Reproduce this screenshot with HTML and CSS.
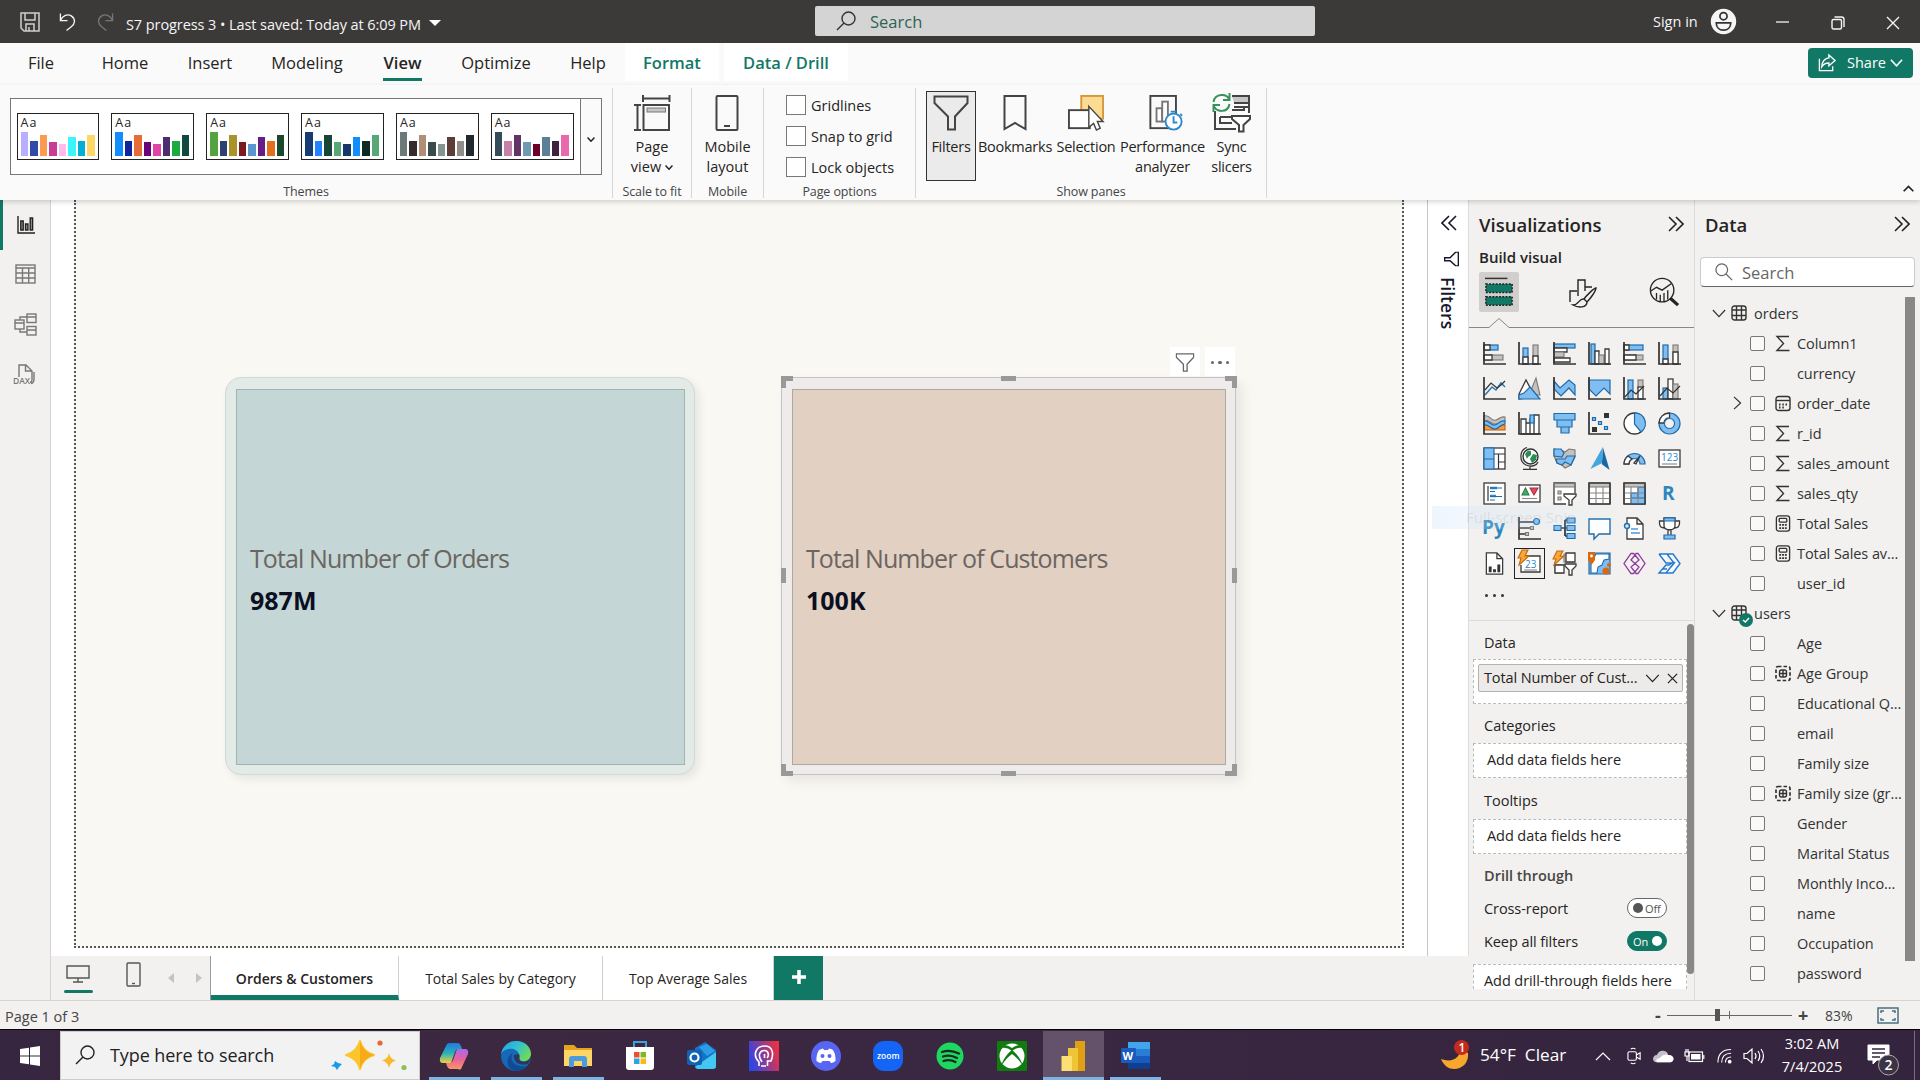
FILE: index.html
```html
<!DOCTYPE html>
<html lang="en">
<head>
<meta charset="utf-8">
<title>S7 progress 3</title>
<link rel="stylesheet" href="styles.css">
</head>
<body>
<svg class="defs" width="0" height="0">
  <symbol id="i-table" viewBox="0 0 16 16"><rect x="1" y="1" width="14" height="14" rx="2.5"/><path d="M1 5H15M1 10.5H15M5.5 1V15M10.5 1V15"/></symbol>
  <symbol id="i-sum" viewBox="0 0 16 16"><path d="M14 1H2L8.500 8L2 15H14.500"/></symbol>
  <symbol id="i-date" viewBox="0 0 16 16"><rect x="1" y="1" width="14" height="14" rx="2.500"/><path d="M1 5H15"/><path d="M4 9h1.500M7.300 9h1.500M10.500 9h1.500M4 12h1.500M7.300 12h1.500" stroke-width="1.800"/></symbol>
  <symbol id="i-calc" viewBox="0 0 16 18"><rect x="1" y="1" width="14" height="16" rx="2.500"/><rect x="4" y="3.500" width="8" height="4" rx="1"/><path d="M4 10.500h2M7 10.500h2M10 10.500h2M4 13.800h2M7 13.800h2M10 13.800h2" stroke-width="1.900"/></symbol>
  <symbol id="i-group" viewBox="0 0 16 16"><rect x="1" y="1" width="14" height="14" rx="2" stroke-dasharray="3.500 2" stroke-width="1.700"/><rect x="4.500" y="4.500" width="7" height="7" rx="2"/><path d="M4.500 8H11.500M8 4.500V11.500"/></symbol>
  <symbol id="i-down" viewBox="0 0 16 10"><path d="M1 1L8 8.500L15 1"/></symbol>
  <symbol id="i-right" viewBox="0 0 10 16"><path d="M1 1L8.500 8L1 15"/></symbol>
  <symbol id="i-dbl" viewBox="0 0 16 16"><path d="M1 1L8 8L1 15M8 1L15 8L8 15"/></symbol>
  <symbol id="i-funnel" viewBox="0 0 36 36"><path d="M1.500 1.500H34.500V8L22 21.500V34.500H15V21.500L1.500 8Z"/></symbol>
  <symbol id="i-glass" viewBox="0 0 20 20"><circle cx="12.500" cy="7.500" r="6.500"/><path d="M8 12L1 19"/></symbol>
</svg>

<header class="titlebar">
  <svg class="tb-save" viewBox="0 0 20 20"><path d="M1 1H19V19H4L1 16ZM5 1V8H15V1M6 19V12H14V19M9 15V19"/></svg>
  <svg class="tb-undo" viewBox="0 0 18 20"><path d="M1.500 1V8.500H9M1.500 8.500C4 3 9 1 13 3.500C18 7 17 12 13 15L8 19"/></svg>
  <svg class="tb-redo" viewBox="0 0 18 20"><path d="M16.500 1V8.500H9M16.500 8.500C14 3 9 1 5 3.500C0 7 1 12 5 15L10 19"/></svg>
  <span class="tb-name">S7 progress 3 • Last saved: Today at 6:09 PM</span>
  <i class="tri"></i>
  <div class="tb-search"><svg viewBox="0 0 20 20"><use href="#i-glass"/></svg><span>Search</span></div>
  <span class="signin">Sign in</span>
  <svg class="avatar" viewBox="0 0 26 26"><circle cx="13" cy="13" r="12.500" fill="#f5f5f5"/><circle cx="13" cy="7.500" r="3.700" fill="none" stroke="#333" stroke-width="1.800"/><path d="M5.500 14.500H20.500C20.500 19 17.500 22 13 22S5.500 19 5.500 14.500Z" fill="none" stroke="#333" stroke-width="1.800"/></svg>
  <svg class="win-min" viewBox="0 0 14 14"><path d="M0 7H14"/></svg>
  <svg class="win-max" viewBox="0 0 14 14"><rect x="1" y="3.500" width="9.500" height="9.500" rx="1.500"/><path d="M3.500 1H10.500Q13 1 13 3.500V11"/></svg>
  <svg class="win-x" viewBox="0 0 14 14"><path d="M1 1L13 13M13 1L1 13"/></svg>
</header>

<nav class="tabs">
  <span class="t-file">File</span><span class="t-home">Home</span><span class="t-insert">Insert</span><span class="t-model">Modeling</span><span class="t-view">View</span><span class="t-opt">Optimize</span><span class="t-help">Help</span><span class="ctx t-format">Format</span><span class="ctx t-drill">Data / Drill</span>
  <button class="share"><svg viewBox="0 0 20 20"><path d="M2 6V18.500H16V14M12 2L18.500 8L12 13.500V10.500C8 10.500 6 12 4.500 14.500C4.500 9 8 5.500 12 5.200Z"/></svg><span>Share</span><svg class="chev" viewBox="0 0 16 10"><use href="#i-down"/></svg></button>
</nav>

<section class="ribbon">
  <div class="group g-themes">
    <div class="gallery">
      <div class="theme"><b>Aa</b><div class="bars"><i style="height:24px;background:#b8b0ff"></i><i style="height:15px;background:#3149a8"></i><i style="height:21px;background:#fa9b50"></i><i style="height:14px;background:#c83c96"></i><i style="height:12px;background:#ffbbea"></i><i style="height:19px;background:#3cf5fa"></i><i style="height:15px;background:#00aed6"></i><i style="height:21px;background:#ffd765"></i></div></div>
      <div class="theme"><b>Aa</b><div class="bars"><i style="height:24px;background:#118dff"></i><i style="height:15px;background:#12239e"></i><i style="height:21px;background:#e66c37"></i><i style="height:14px;background:#6b007b"></i><i style="height:12px;background:#e044a7"></i><i style="height:19px;background:#4b2e70"></i><i style="height:15px;background:#1aab40"></i><i style="height:21px;background:#12483e"></i></div></div>
      <div class="theme"><b>Aa</b><div class="bars"><i style="height:24px;background:#55a33f"></i><i style="height:15px;background:#2e4272"></i><i style="height:21px;background:#aa9328"></i><i style="height:14px;background:#7d1a20"></i><i style="height:12px;background:#5a97cf"></i><i style="height:19px;background:#671d86"></i><i style="height:15px;background:#e2701e"></i><i style="height:21px;background:#1a482c"></i></div></div>
      <div class="theme"><b>Aa</b><div class="bars"><i style="height:24px;background:#173c73"></i><i style="height:15px;background:#2382ff"></i><i style="height:21px;background:#174638"></i><i style="height:14px;background:#57a777"></i><i style="height:12px;background:#143867"></i><i style="height:19px;background:#118dff"></i><i style="height:15px;background:#0d2a24"></i><i style="height:21px;background:#57a777"></i></div></div>
      <div class="theme"><b>Aa</b><div class="bars"><i style="height:24px;background:#6b7979"></i><i style="height:15px;background:#362c2d"></i><i style="height:21px;background:#b18e78"></i><i style="height:14px;background:#3b4b4a"></i><i style="height:12px;background:#849594"></i><i style="height:19px;background:#5c3d37"></i><i style="height:15px;background:#918e8a"></i><i style="height:21px;background:#22292e"></i></div></div>
      <div class="theme"><b>Aa</b><div class="bars"><i style="height:24px;background:#344b59"></i><i style="height:15px;background:#c582a8"></i><i style="height:21px;background:#633567"></i><i style="height:14px;background:#6f9ab4"></i><i style="height:12px;background:#6b0028"></i><i style="height:19px;background:#5b7f96"></i><i style="height:15px;background:#3f2140"></i><i style="height:21px;background:#ea69ac"></i></div></div>
      <div class="more"><svg viewBox="0 0 16 10"><use href="#i-down"/></svg></div>
    </div>
    <div class="glabel">Themes</div>
  </div>
  <div class="group g-scale">
    <div class="big"><svg viewBox="0 0 36 36"><path d="M9 0V7M35.500 0V7M9 3.500H35M0 10H7M0 35H7M3.500 10V35"/><rect x="9.500" y="10" width="25.500" height="25"/><rect x="13" y="13" width="18.500" height="4" fill="#c8c6c4" stroke="#797775" stroke-width="1"/></svg><span>Page<br>view<svg class="tiny" viewBox="0 0 16 10"><use href="#i-down"/></svg></span></div>
    <div class="glabel">Scale to fit</div>
  </div>
  <div class="group g-mobile">
    <div class="big"><svg viewBox="0 0 36 36"><rect x="7.500" y="1" width="21" height="34" rx="1"/><path d="M15 31H21"/></svg><span>Mobile<br>layout</span></div>
    <div class="glabel">Mobile</div>
  </div>
  <div class="group g-options">
    <div class="opts"><label><i></i>Gridlines</label><label><i></i>Snap to grid</label><label><i></i>Lock objects</label></div>
    <div class="glabel">Page options</div>
  </div>
  <div class="group g-panes">
    <div class="row">
      <div class="big b-filters"><svg viewBox="0 0 36 36"><use href="#i-funnel"/></svg><span>Filters</span></div>
      <div class="big b-book"><svg viewBox="0 0 36 36"><path d="M7.500 1H28.500V34L18 28L7.500 34Z"/></svg><span>Bookmarks</span></div>
      <div class="big b-sel"><svg viewBox="0 0 38 38"><rect x="14" y="1" width="23" height="24" fill="#fbdc92" stroke="#d9973c"/><rect x="1" y="16" width="22" height="19" fill="#fff"/><path d="M22 12L37 28H31L34 35L30 37L27 30L22 34Z" fill="#fff" stroke-width="1.500"/></svg><span>Selection</span></div>
      <div class="big b-perf"><svg viewBox="0 0 36 38"><rect x="1.500" y="1" width="27" height="34"/><rect x="8" y="14" width="6" height="14" stroke="#777" fill="#fff"/><rect x="14" y="7" width="6" height="21" stroke="#777" fill="#fff"/><circle cx="26" cy="28" r="8.500" fill="#fff" stroke="#2c8acb"/><path d="M26 22.500V29H30M23 17.500H29M33 20L35 22" stroke="#2c8acb"/></svg><span>Performance<br>analyzer</span></div>
      <div class="big b-sync"><svg viewBox="0 0 40 40"><path d="M20 3H37V10H22" fill="#c8c6c4"/><path d="M22 14H37V18M3 18V36H24M37 10V20M8 24H22M8 24V30H20M20 17H32V13" /><path d="M20 23H38V26L31.500 32V38.500H27V32L20 26Z" fill="#fff"/><path d="M1.500 9C3 0 15 0 17.500 7M17.500 0V7H11M17.500 11C16 20 4 20 1.500 12M1.500 19V12H8" stroke="#36945a"/></svg><span>Sync<br>slicers</span></div>
    </div>
    <div class="glabel">Show panes</div>
  </div>
  <div class="rest"><svg viewBox="0 0 16 10"><path d="M1 9L8 2L15 9"/></svg></div>
</section>

<main class="work">
  <aside class="rail">
    <div class="on"><svg class="r1" viewBox="0 0 18 18"><path d="M1 0V17H18" /><path d="M3.800 5H6.200V14H3.800ZM8.500 8H10.900V14H8.500ZM13.200 2H15.600V14H13.200Z" fill="#999"/></svg></div>
    <div><svg viewBox="0 0 21 20"><rect x="1" y="1" width="19" height="18"/><path d="M1 4H20M1 9H20M1 14H20M7.500 4V19M13.700 4V19"/></svg></div>
    <div><svg class="r3" viewBox="0 0 23 23"><rect x="1" y="7" width="9" height="9"/><path d="M1 10H10M6 7V4H13M6 16V19H13M13 4H22M13 17H22"/><rect x="13" y="1" width="9" height="8.500"/><rect x="13" y="13.500" width="9" height="8.500"/></svg></div>
    <div><svg class="r4" viewBox="0 0 22 21"><path d="M6 13V1H13L19 7V16Q19 18 17 18.500M12.500 1V7H19M21 8V15Q21 19 18 19.500"/><text x="0" y="20">DAX</text></svg></div>
  </aside>

  <section class="center">
    <div class="canvas">
      <div class="page">
        <article class="card c1"><div class="inner"><p>Total Number of Orders</p><strong>987M</strong></div></article>
        <article class="card c2"><div class="inner"><p>Total Number of Customers</p><strong>100K</strong></div>
          <i class="h tl"></i><i class="h tr"></i><i class="h bl"></i><i class="h br"></i><i class="h tm"></i><i class="h bm"></i><i class="h lm"></i><i class="h rm"></i>
          <div class="tools"><span><svg viewBox="0 0 36 36"><use href="#i-funnel"/></svg></span><span class="dots"><i></i><i></i><i></i></span></div>
        </article>
      </div>
    </div>
    <div class="filters">
      <svg class="dbl flip" viewBox="0 0 16 16"><use href="#i-dbl"/></svg>
      <svg class="fun" viewBox="0 0 36 36"><use href="#i-funnel"/></svg>
      <span>Filters</span>
    </div>
    <footer class="pages">
      <div class="views">
        <svg class="desk" viewBox="0 0 24 18"><path d="M1 1H23V13H1ZM12 13V17M7 17H17"/></svg>
        <svg class="phone" viewBox="0 0 15 25"><rect x="1" y="1" width="13" height="23" rx="1"/><path d="M6 21.500H9"/></svg>
        <i class="al"></i><i class="ar"></i>
      </div>
      <div class="pt p1">Orders &amp; Customers</div><div class="pt p2">Total Sales by Category</div><div class="pt p3">Top Average Sales</div><div class="add"><svg viewBox="0 0 14 14"><path d="M7 0V14M0 7H14"/></svg></div>
    </footer>
  </section>

  <section class="viz">
    <div class="head"><h2>Visualizations</h2><svg class="dbl" viewBox="0 0 16 16"><use href="#i-dbl"/></svg></div>
    <h3>Build visual</h3>
    <div class="modes">
      <div class="m on"><svg viewBox="0 0 32 32"><path d="M1 1.500H25" stroke="#333" stroke-width="1.600"/><rect x="2" y="7.500" width="28" height="9" fill="#117865" stroke="#222" stroke-width="1.600" stroke-dasharray="2 1.500"/><rect x="2" y="21" width="28" height="9" fill="#117865" stroke="#222" stroke-width="1.600" stroke-dasharray="2 1.500"/></svg></div>
      <div class="m"><svg viewBox="0 0 30 30"><path d="M3 25V14H10M11 19V3H18V14M18 10H25"/><path d="M29 11C27 11 19 19 17 22C18 23 19 24 20 25C23 22 29 14 29 11ZM17 22C12 21 12 28 6 28C11 31 20 31 20 25"/></svg></div>
      <div class="m"><svg viewBox="0 0 32 32"><circle cx="14" cy="14" r="12.500"/><path d="M2 15L8 11L14 14L24 7M8 24V17M12 26V19M16 26V17M20 24V14"/><path d="M23 23L31 30" stroke-width="3.500"/></svg></div>
    </div>
    <svg class="notch" viewBox="0 0 225 12"><path d="M0 10.500H20L30 1.500L40 10.500H225"/></svg>
    <div class="grid">
      <svg viewBox="0 0 23 23"><rect class="b" x="1" y="3" width="14" height="5"/><path class="w" d="M1 3H7V8H1Z"/><rect class="g" x="1" y="13" width="19" height="5"/><path class="w" d="M1 13H9V18H1Z"/><path class="k" d="M1 0V22H23"/></svg>
      <svg viewBox="0 0 23 23"><rect class="b" x="5" y="6" width="5" height="16"/><path class="w" d="M5 15H10V22H5Z"/><rect class="g" x="15" y="3" width="5" height="19"/><path class="w" d="M15 14H20V22H15Z"/><path class="k" d="M1 0V22H23"/></svg>
      <svg viewBox="0 0 23 23"><rect class="b" x="1" y="2" width="21" height="4"/><path class="w" d="M1 6H14V10H1Z"/><rect class="g" x="1" y="10" width="10" height="5"/><path class="w" d="M1 16H17V20H1Z"/><path class="k" d="M1 0V22H23"/></svg>
      <svg viewBox="0 0 23 23"><rect class="b" x="3" y="2" width="4" height="20"/><path class="w" d="M7 9H11V22H7Z"/><rect class="g" x="11" y="13" width="5" height="9"/><path class="w" d="M17 7H21V22H17Z"/><path class="k" d="M1 0V22H23"/></svg>
      <svg viewBox="0 0 23 23"><rect class="b" x="1" y="3" width="19" height="5"/><path class="w" d="M1 3H6V8H1Z"/><rect class="g" x="1" y="13" width="19" height="5"/><path class="w" d="M1 13H13V18H1Z"/><path class="k" d="M1 0V22H23"/></svg>
      <svg viewBox="0 0 23 23"><rect class="b" x="5" y="3" width="5" height="19"/><path class="w" d="M5 17H10V22H5Z"/><rect class="g" x="15" y="3" width="5" height="19"/><path class="w" d="M15 10H20V22H15Z"/><path class="k" d="M1 0V22H23"/></svg>

      <svg viewBox="0 0 23 23"><path class="t" d="M2 18L9 10L13 13L18 6L22 10"/><path class="k n" d="M2 13L8 6L14 11L18 8L22 4"/><path class="k" d="M1 0V22H23"/></svg>
      <svg viewBox="0 0 23 23"><path class="g" d="M11 18L18 1L22 18Z"/><path class="w" d="M1 17L8 3L17 20L1 22Z"/><path class="b" d="M1 22V18L6 16L12 10L22 22Z"/></svg>
      <svg viewBox="0 0 23 23"><path class="b" d="M1 4L7 11L16 3L22 8V18L16 11L8 19L1 12Z"/><path class="k" d="M1 0V22H23"/></svg>
      <svg viewBox="0 0 23 23"><path class="b" d="M1 3H22V17L16 11L8 19L1 12Z"/><path class="k" d="M1 0V22H23"/></svg>
      <svg viewBox="0 0 23 23"><rect class="b" x="5" y="3" width="5" height="19"/><rect class="g" x="15" y="3" width="5" height="8"/><rect class="w" x="15" y="10" width="5" height="12"/><path class="k n" d="M2 20L8 13L13 17L21 9"/><path class="k" d="M1 0V22H23"/></svg>
      <svg viewBox="0 0 23 23"><rect class="b" x="5" y="11" width="5" height="11"/><rect class="w" x="10" y="2" width="5" height="20"/><rect class="g" x="15" y="7" width="5" height="15"/><path class="k n" d="M2 19L9 11L15 16L22 9"/><path class="k" d="M1 0V22H23"/></svg>

      <svg viewBox="0 0 23 23"><path d="M1 4C8 2 7 10 13 8C17 7 17 4 22 5V9C16 10 15 13 11 12C7 11 6 7 1 9Z" class="g"/><path d="M1 11C7 10 7 18 12 17C17 16 17 12 22 13V18H1Z" fill="#f29a3c" stroke="#c25d0c"/><path class="b" d="M1 9C6 8 8 14 12 13C16 12 17 8 22 9V12C17 12 16 17 12 17C7 17 6 12 1 13Z"/><path class="k" d="M1 0V22H23"/></svg>
      <svg viewBox="0 0 23 23"><path class="w" d="M3 7H8V22H3ZM8 11H12V22H8ZM12 7H16V22H12ZM16 3H21V22H16Z"/><rect class="b" x="12" y="3" width="4" height="8"/><path class="k" d="M1 0V22H23"/></svg>
      <svg viewBox="0 0 23 23"><path class="b" d="M1 1.500H22V8H1ZM4 8H19V15H4ZM8 15H16V21H8Z"/></svg>
      <svg viewBox="0 0 23 23"><path class="k" d="M1 0V22H23"/><path class="ns" d="M16 1h5v5h-5zM4 15h5v5h-5z" fill="#333"/><path class="b" d="M4.500 5.500h3v3h-3zM10.500 9.500h3v3h-3zM16.500 14.500h3v3h-3z"/></svg>
      <svg viewBox="0 0 23 23"><circle class="w" cx="11.500" cy="11.500" r="10.500"/><path class="b" d="M11.500 1A10.500 10.500 0 0 1 18 20L11.500 12Z"/></svg>
      <svg viewBox="0 0 23 23"><circle class="b" cx="11.500" cy="11.500" r="10.500"/><path class="w" d="M1 11A10.500 10.500 0 0 1 11.500 1V6A5 5 0 0 0 6 11Z"/><circle cx="11.500" cy="11.500" r="5" fill="#f2f1ef" stroke="#1f6cab"/></svg>

      <svg viewBox="0 0 23 23"><rect class="w" x="1" y="1" width="21" height="21"/><path class="b" d="M1 1H11V22H1ZM1 12H11"/><path class="k n" d="M11 7H22M15.500 7V22M15.500 15H22"/></svg>
      <svg viewBox="0 0 23 23"><circle cx="12.500" cy="9.500" r="7.500" fill="#fff" stroke="#333" stroke-width="1.400"/><path class="ns" d="M7 7L10 3.500L13 4L13 8L10 10L9 12ZM12 12L15 7L19 8L18 13L14 16Z" fill="#2c8f52"/><path class="k n" d="M9 0.500C1 3 1 15 8 18C14 20.500 19 18 20 15M12 19V22M5 22.300H19"/></svg>
      <svg viewBox="0 0 23 23"><path class="g" d="M1 2L8 3L12 5L16 2L22 3V10L18 18L12 21L9 18L4 16L1 9Z"/><path class="b" d="M1 2H8L11 6L9 10L1 9ZM3 12H12L14 9H22L18 18L12 15L9 18L4 16Z"/></svg>
      <svg viewBox="0 0 23 24"><path class="ns" d="M15 0L22 24L14 18Z" fill="#1768a4"/><path class="ns" d="M15 0L14 17L2 23Z" fill="#45a5df"/></svg>
      <svg viewBox="0 0 23 23"><path class="b" d="M1 17A10.500 10.500 0 0 1 22 17H17A5.500 5.500 0 0 0 6 17Z"/><path class="w" d="M1 17A10.500 10.500 0 0 1 5 9L9 12A5.500 5.500 0 0 0 6 17ZM11 16L17 9L13 17Z"/></svg>
      <svg viewBox="0 0 23 23"><rect class="w" x="1" y="3" width="21" height="17"/><text class="n123" x="3" y="14">123</text><path class="gl" d="M4 17H19"/></svg>

      <svg viewBox="0 0 23 23"><rect class="w" x="1" y="1" width="21" height="21"/><path class="k n" d="M5 4V19"/><path d="M7 6H14M7 14H13" stroke="#2c8acb" stroke-width="2.500"/><path d="M7 6H19M7 9.500H12M7 14.500H19M7 18H12" stroke="#1f6cab"/></svg>
      <svg viewBox="0 0 23 23"><rect class="w" x="1" y="3" width="21" height="17"/><path d="M4 13L7.500 6L11 13Z" fill="#54a668" stroke="#23804a"/><path d="M12 6H20L16 13Z" fill="#e04b5b" stroke="#b0303e"/><path class="gl" d="M4 16.500H19"/></svg>
      <svg viewBox="0 0 23 23"><path class="w" d="M13 22H1V1H22V11"/><path class="g" d="M1.500 1.500H21.500V5H1.500ZM5 9H8V12H5ZM5 15H8V18H5Z"/><path class="w" d="M11 12H23V14L19 18V23H16V18L11 14Z"/></svg>
      <svg viewBox="0 0 23 23"><rect class="w" x="1" y="1" width="21" height="21"/><path class="g" d="M1.500 1.500H21.500V5H1.500Z"/><path class="gl" d="M1 11H22M1 16.500H22M8 5V22M15 5V22"/><path class="k n" d="M1 1H22V22H1Z"/></svg>
      <svg viewBox="0 0 23 23"><rect class="w" x="1" y="1" width="21" height="21"/><path class="b" d="M15 5H22V16H15ZM8 16H22V22H8ZM8 11H15V16H8Z"/><path class="g" d="M1.500 1.500H21.500V5H1.500Z"/><path class="gl" d="M1 11H22M1 16.500H22M8 5V22M15 5V22"/><path class="k n" d="M1 1H22V22H1Z"/></svg>
      <svg viewBox="0 0 23 23"><text class="r" x="4" y="18">R</text></svg>

      <svg viewBox="0 0 23 23"><text class="py" x="-1" y="17">Py</text></svg>
      <svg viewBox="0 0 23 23"><path class="k" d="M1 0V22H23M1 5H16M1 11H12M1 17H7"/><circle class="b" cx="18.500" cy="4.500" r="3"/><path class="g" d="M12.500 9.500h3v3h-3zM7.500 15.500h3v3h-3z"/></svg>
      <svg viewBox="0 0 23 23"><path class="k" d="M8 11H16M12 3V19M12 3H16M12 19H16"/><path class="b" d="M1 8.500H8V13.500H1ZM14 1H22V6H14ZM14 8.500H22V13.500H14ZM14 16.500H22V21.500H14Z"/></svg>
      <svg viewBox="0 0 23 23"><path d="M1 2H22V17H11L6 22V17H1Z" fill="#fff" stroke="#1f6cab" stroke-width="1.400"/></svg>
      <svg viewBox="0 0 23 23"><path class="w" d="M4 1H14L20 7V22H4ZM14 1V7H20"/><circle cx="4" cy="9" r="2.500" fill="#cfe6fa" stroke="#1f6cab" stroke-width="1.400"/><path d="M8 12H15M8 16H17" stroke="#4f9bd8" stroke-width="1.300"/></svg>
      <svg viewBox="0 0 23 23"><path class="w" d="M6 1H17V9C17 14 6 14 6 9ZM6 4H1.500V6C1.500 10 4 11 6.500 11M17 4H21.500V6C21.500 10 19 11 16.500 11M10 13V18M13 13V18"/><path class="b" d="M6 1H17V4H6ZM6 18H17V22H6Z"/></svg>

      <svg viewBox="0 0 23 24"><path class="w" d="M3 1H14L20 7V23H3ZM14 1V7H20"/><path class="ns" d="M5.500 15h3v6h-3zM10 18h3v3h-3zM14.500 13h3v8h-3z" fill="#333"/></svg>
      <svg class="sel" viewBox="0 0 23 23"><path class="w" d="M5 4H22V20H3V13"/><text class="n123" x="7" y="16">23</text><path class="gl" d="M6 18H19"/><path d="M4 -2H10L7 4H11L1 13L3 6H0Z" fill="#f9a63a" stroke="#c46a0d"/></svg>
      <svg viewBox="0 0 23 23"><path class="g" d="M11 2H21V10H11ZM2 13H10V21H2Z"/><path class="w" d="M13 1H22V10H13ZM2 13H11V21H2Z"/><path d="M4 -1H10L7 4H11L1 13L3 7H0Z" fill="#f9a63a" stroke="#c46a0d"/><path class="w" d="M12 12H23V14L19 18V23H16V18L12 14Z"/></svg>
      <svg viewBox="0 0 23 23"><path class="b" d="M1 1H22V22H1Z"/><path d="M8 2H21V7L16 8L14 13L10 15L9 21H3V11Z" fill="#fff" stroke="#1f6cab"/><path class="ns" d="M0 0H7V8L3.500 13L0 8Z" fill="#d9690f"/><circle class="ns" cx="3.500" cy="4" r="1.400" fill="#fff"/><circle class="ns" cx="21" cy="13" r="2" fill="#d9690f"/><circle class="ns" cx="18" cy="19" r="3.500" fill="#d9690f"/></svg>
      <svg viewBox="0 0 23 23"><path d="M8 1.500H10.500L12 3L13 1.500H15L22 11.500L15 21.500H13L12 20L10.500 21.500H8L1 11.500ZM12 3L16 8L8 15L12 20L16 15L8 8Z" fill="none" stroke="#8c3a9c" stroke-width="1.300"/></svg>
      <svg viewBox="0 0 23 23"><path d="M1 2H15L22 11.500L15 21H1L8 13H11L14 11L8 11L1 2M8 21L16 11L9 2M4 17H9M13 15L17 10" fill="#f4faff" stroke="#2478cc" stroke-width="1.400"/></svg>
      <span class="ell"><i></i><i></i><i></i></span>
    </div>
    <div class="wells">
      <h4>Data</h4>
      <div class="well first"><div class="chip"><span>Total Number of Cust...</span><svg viewBox="0 0 16 10"><use href="#i-down"/></svg><svg class="x" viewBox="0 0 12 12"><path d="M1 1L11 11M11 1L1 11"/></svg></div></div>
      <h4 class="cat">Categories</h4>
      <div class="well">Add data fields here</div>
      <h4 class="tips">Tooltips</h4>
      <div class="well">Add data fields here</div>
      <h4 class="dt">Drill through</h4>
      <div class="tg"><span>Cross-report</span><div class="toggle off"><i></i>Off</div></div>
      <div class="tg t2"><span>Keep all filters</span><div class="toggle onn">On<i></i></div></div>
      <div class="well last">Add drill-through fields here</div>
      <i class="sb"></i>
    </div>
  </section>

  <section class="data">
    <div class="head"><h2>Data</h2><svg class="dbl" viewBox="0 0 16 16"><use href="#i-dbl"/></svg></div>
    <div class="find"><svg viewBox="0 0 20 20"><use href="#i-glass"/></svg><span>Search</span></div>
    <div class="tree">
      <div class="tn"><svg class="c" viewBox="0 0 16 10"><use href="#i-down"/></svg><svg class="ti"><use href="#i-table"/></svg><span>orders</span></div>
      <div class="f"><i></i><svg><use href="#i-sum"/></svg><span>Column1</span></div>
      <div class="f"><i></i><svg></svg><span>currency</span></div>
      <div class="f"><svg class="ex" viewBox="0 0 10 16"><use href="#i-right"/></svg><i></i><svg><use href="#i-date"/></svg><span>order_date</span></div>
      <div class="f"><i></i><svg><use href="#i-sum"/></svg><span>r_id</span></div>
      <div class="f"><i></i><svg><use href="#i-sum"/></svg><span>sales_amount</span></div>
      <div class="f"><i></i><svg><use href="#i-sum"/></svg><span>sales_qty</span></div>
      <div class="f"><i></i><svg><use href="#i-calc"/></svg><span>Total Sales</span></div>
      <div class="f"><i></i><svg><use href="#i-calc"/></svg><span>Total Sales av...</span></div>
      <div class="f"><i></i><svg></svg><span>user_id</span></div>
      <div class="tn"><svg class="c" viewBox="0 0 16 10"><use href="#i-down"/></svg><svg class="ti"><use href="#i-table"/></svg><span>users</span><svg class="ok" viewBox="0 0 14 14"><circle class="ns" cx="7" cy="7" r="7" fill="#117865"/><path d="M4 7L6.300 9L10 5" fill="none" stroke="#fff" stroke-width="1.500"/></svg></div>
      <div class="f"><i></i><svg></svg><span>Age</span></div>
      <div class="f"><i></i><svg><use href="#i-group"/></svg><span>Age Group</span></div>
      <div class="f"><i></i><svg></svg><span>Educational Q...</span></div>
      <div class="f"><i></i><svg></svg><span>email</span></div>
      <div class="f"><i></i><svg></svg><span>Family size</span></div>
      <div class="f"><i></i><svg><use href="#i-group"/></svg><span>Family size (gr...</span></div>
      <div class="f"><i></i><svg></svg><span>Gender</span></div>
      <div class="f"><i></i><svg></svg><span>Marital Status</span></div>
      <div class="f"><i></i><svg></svg><span>Monthly Inco...</span></div>
      <div class="f"><i></i><svg></svg><span>name</span></div>
      <div class="f"><i></i><svg></svg><span>Occupation</span></div>
      <div class="f"><i></i><svg></svg><span>password</span></div>
      <i class="sb"></i>
    </div>
  </section>
  <div class="ghost">Full-screen Snip</div>
</main>

<footer class="status">
  <span class="pg">Page 1 of 3</span>
  <b class="minus">-</b><div class="slider"><i class="tick"></i><i class="thumb"></i></div><b class="plus">+</b><span class="pct">83%</span>
  <svg viewBox="0 0 22 17"><rect x="1" y="1" width="20" height="15"/><path d="M4 6V4H7M15 4H18V6M4 11V13H7M15 13H18V11"/></svg>
</footer>

<footer class="taskbar">
  <div class="start"><svg viewBox="0 0 20 20"><path d="M0 3L9 1.700V9.500H0ZM10 1.500L20 0V9.500H10ZM0 10.500H9V18.300L0 17ZM10 10.500H20V20L10 18.500Z" fill="#fff"/></svg></div>
  <div class="tsearch"><svg class="g" viewBox="0 0 20 20"><use href="#i-glass"/></svg><span>Type here to search</span>
    <svg class="spark" viewBox="0 0 76 30"><path d="M29 1Q32 12 43 15Q32 18 29 29Q26 18 15 15Q26 12 29 1Z" fill="#fcc52c" stroke="#fcc52c" stroke-width="2" stroke-linejoin="round"/><path d="M29 1Q32 12 43 15Q32 18 29 29Z" fill="#f8aa17"/><path d="M58 13Q59 19 65 20.500Q59 22 58 28Q57 22 51 20.500Q57 19 58 13Z" fill="#f9b92d"/><path d="M4 21L7 23L11 24L8 27L6 30L4 27L0 26L3 24Z" fill="#189be8"/><circle cx="49" cy="3" r="2.600" fill="#e66a39"/><circle cx="73" cy="27.500" r="2.600" fill="#8dc152"/></svg></div>
  <div class="apps">
    <div class="app run"><svg viewBox="0 0 30 30"><defs><linearGradient id="cp" x1="0" y1="0" x2="0" y2="1"><stop offset="0" stop-color="#2378e0"/><stop offset=".5" stop-color="#24b2ba"/><stop offset="1" stop-color="#f2d03a"/></linearGradient><linearGradient id="cq" x1="0" y1="0" x2="0" y2="1"><stop offset="0" stop-color="#a76be8"/><stop offset=".5" stop-color="#e8609f"/><stop offset="1" stop-color="#fb9a5d"/></linearGradient></defs><path d="M8 3Q9 2 11 2H19Q21 2 22 5L23 8H19Q17 8 16 11L12 22H4Q0 22 1 17Z" fill="url(#cp)"/><path d="M22 28Q21 29 19 28H11Q9 28 8 25L7 22H11Q13 22 14 19L18 8H26Q30 8 29 13Z" fill="url(#cq)"/></svg></div>
    <div class="app run"><svg viewBox="0 0 30 30"><defs><linearGradient id="eg" x1="0" y1="0" x2="1" y2=".6"><stop offset="0" stop-color="#2c9fe0"/><stop offset=".5" stop-color="#2fc0d4"/><stop offset="1" stop-color="#6ddc55"/></linearGradient></defs><circle cx="15" cy="15" r="15" fill="#1668b8"/><path d="M0 13C2 4 9 0 15 0C25 0 30 7 30 13C30 18 26 21 21 20C17 19 19 16 18 13C15 5 3 7 0 13Z" fill="url(#eg)"/><path d="M12 12C8 18 12 27 26 25C22 30 15 31 11 29C4 25 6 14 12 12Z" fill="#104c93"/><path d="M18 13C20 17 16 19 21 20.500C25 21.500 29 19 30 14V17L27 23C20 25 12 22 13 14Z" fill="#35253e" opacity=".75"/></svg></div>
    <div class="app run"><svg viewBox="0 0 30 30"><path d="M1 4H11L14 7H29V25H1Z" fill="#e3a51f"/><path d="M1 9H29V25H1Z" fill="#fdd667"/><path d="M6 26V18Q6 15 9 15H21Q24 15 24 18V26H19V20H11V26Z" fill="#4c9bdc"/></svg></div>
    <div class="app"><svg viewBox="0 0 30 30"><path class="hndl" d="M9 6V1H21V6"/><path d="M1 6H29V26Q29 29 26 29H4Q1 29 1 26Z" fill="#fff"/><path d="M9 11h5.500v5.500H9z" fill="#e8522a"/><path d="M15.500 11H21v5.500h-5.500z" fill="#7db928"/><path d="M9 17.500h5.500V23H9z" fill="#2aa3e8"/><path d="M15.500 17.500H21V23h-5.500z" fill="#fdb813"/></svg></div>
    <div class="app"><svg viewBox="0 0 30 30"><path d="M8 7L18 1L29 9V27H8Z" fill="#1572c4"/><path d="M12 6L20 3L28 10L20 15Z" fill="#2f9de6"/><path d="M8 26L29 11V25Q29 28 26 28H10Z" fill="#42c8f2"/><rect y="9" width="15" height="15" rx="2" fill="#0f63b6"/><circle cx="7.500" cy="16.500" r="4" fill="none" stroke="#fff" stroke-width="2.200"/></svg></div>
    <div class="app"><svg viewBox="0 0 30 30"><defs><linearGradient id="hd" x1="0" y1=".6" x2="1" y2=".3"><stop stop-color="#2a46e8"/><stop offset="1" stop-color="#f0303f"/></linearGradient></defs><rect width="30" height="30" fill="url(#hd)"/><path d="M10 25V21C3 14 7 5 15.500 5C24 5 25 13 22 20H18.500V25M13 21C8 14 11 9.500 15.500 9.500C20 9.500 20 15 18 17M15.500 13V17M12 25H17" fill="none" stroke="#fff" stroke-width="1.600"/></svg></div>
    <div class="app"><svg viewBox="0 0 30 30"><circle cx="15" cy="15" r="15" fill="#5865f2"/><path d="M8 9Q11 7.500 12 7.500L13 9H17L18 7.500Q20 7.500 22 9Q25 14 24.500 20Q22 22 20 22L18.500 20H11.500L10 22Q8 22 5.500 20Q5 14 8 9Z" fill="#fff"/><circle cx="11.500" cy="15" r="2" fill="#5865f2"/><circle cx="18.500" cy="15" r="2" fill="#5865f2"/></svg></div>
    <div class="app"><svg viewBox="0 0 30 30"><rect width="30" height="30" rx="11" fill="#1464f6"/><text class="zm" x="4" y="18">zoom</text></svg></div>
    <div class="app"><svg viewBox="0 0 30 30"><circle cx="15" cy="15" r="13.500" fill="#1ed760"/><path d="M7 11Q15 8 24 12.500M8 15.500Q15 13 22 17M8.500 20Q15 18 20.500 21" fill="none" stroke="#1b2a20" stroke-width="2.300" stroke-linecap="round"/></svg></div>
    <div class="app"><svg viewBox="0 0 30 30"><rect width="30" height="30" rx="1" fill="#107c10"/><circle cx="15" cy="15" r="12.500" fill="#fff"/><path d="M4 25C6 18 11 12 15 9C19 12 24 18 26 25C22 19 18 15 15 13C12 15 8 19 4 25ZM7 4Q11 4 15 7Q19 4 23 4L25 7Q20 6 15 10Q10 6 5 7Z" fill="#107c10"/></svg></div>
    <div class="app run active"><svg viewBox="0 0 30 30"><path d="M16 0H26V30H16Z" fill="#dfa013"/><path d="M9 7H19V30H9Z" fill="#efc436"/><path d="M2.500 15H13V30H2.500Z" fill="#fbdf72"/></svg></div>
    <div class="app run"><svg viewBox="0 0 30 30"><path d="M8 1H30V8H8Z" fill="#41a5ee"/><path d="M8 8H30V15H8Z" fill="#2b7cd3"/><path d="M8 15H30V22H8Z" fill="#185abd"/><path d="M8 22H30V28H8Z" fill="#103f91"/><rect x="1" y="7" width="15" height="15" rx="1" fill="#185abd"/><text class="wd" x="2.500" y="18.500">W</text></svg></div>
  </div>
  <div class="weather"><svg viewBox="0 0 30 30"><path d="M20 8C21 18 12 23 1 19C4 26 9 29 14 29C23 29 29 22 28 13Z" fill="#f5a82b"/><circle cx="21.500" cy="7.500" r="7.500" fill="#c42b1c"/><text x="18.500" y="12">1</text></svg><span>54°F&nbsp; Clear</span></div>
  <div class="tray">
    <svg class="s1" viewBox="0 0 16 10"><path d="M1 9L8 2L15 9"/></svg>
    <svg class="s2" viewBox="0 0 16 18"><rect x="1" y="4.500" width="9" height="9" rx="1.500"/><path d="M10 8L14 5.500V12.500L10 10M4 1.500Q6.500 0 9 1.500M4 16.500Q6.500 18 9 16.500"/></svg>
    <svg class="s3" viewBox="0 0 22 14"><path d="M4 13.500Q0 13 0 9.500Q1 6 4 6Q6 1 11 1.500Q15 2 16 6Q21 6 21.500 10Q21 13.500 18 13.500Z" fill="#c4bfc8" stroke="none"/><path d="M4 13.500Q2 10 7 9Q12 4 16 6Q21 6 21.500 10Q21 13.500 18 13.500Z" fill="#fff" stroke="none"/></svg>
    <svg class="s4" viewBox="0 0 20 14"><rect x="5" y="3" width="13.500" height="9.500"/><rect x="7" y="5" width="9.500" height="5.500" fill="#fff" stroke="none"/><path d="M19.800 6V10M1 3H5V7H1ZM2 3V0M4 3V0M3 7V12"/></svg>
    <svg class="s5" viewBox="0 0 16 16"><path d="M1 15Q1 1 15 1M5 15Q5 5 15 5M9 15Q9 9 15 9"/><circle cx="13.500" cy="14" r="2" fill="#fff" stroke="none"/></svg>
    <svg class="s6" viewBox="0 0 22 16"><path d="M1 5.500H4L9 1V15L4 10.500H1ZM12 5Q14 8 12 11M15 3Q18.500 8 15 13M18 1Q23 8 18 15"/></svg>
  </div>
  <div class="clock"><span>3:02 AM</span><span>7/4/2025</span></div>
  <div class="notif"><svg viewBox="0 0 32 32"><path d="M0 0H21V15H9L5 19V15H0Z" fill="#fff"/><path d="M4 4H17M4 8H17M4 12H12" stroke="#35253e" stroke-width="1.500"/><circle cx="20.500" cy="20" r="10" fill="#3c3344" stroke="#aaa"/><text x="16.500" y="25">2</text></svg></div>
</footer>
</body>
</html>
```
FILE: styles.css
```css
* { box-sizing: border-box; margin: 0; padding: 0; }
html, body { width: 1920px; height: 1080px; overflow: hidden; }
body {
  display: flex; flex-direction: column;
  font-family: "Open Sans", "Noto Sans", sans-serif; font-stretch: 93%;
  font-size: 15px; color: #252423; white-space: nowrap; background: #f2f1ef;
}
svg { fill: none; stroke: currentColor; stroke-width: 1.4; flex: none; overflow: visible; }
svg text { stroke: none; fill: currentColor; }
i { display: block; flex: none; }
.defs { position: absolute; }
.ns { stroke: none; }

/* title bar */
.titlebar { height: 43px; background: #3b3a39; color: #f5f5f5; display: flex; align-items: center; flex: none; }
.tb-save { width: 20px; height: 20px; margin-left: 20px; stroke-width: 1.500; color: #d0d0d0; }
.tb-undo { width: 17px; height: 20px; margin-left: 19px; }
.tb-redo { width: 17px; height: 20px; margin-left: 21px; color: #777; }
.tb-name { width: 296px; margin: 6px 0 0 12px; font-size: 14.500px; letter-spacing: -0.080px; }
.tri { margin: 2px 0 0 7px; border: 6px solid transparent; border-top-color: #fff; border-bottom: 0; }
.tb-search { width: 500px; height: 30px; margin: -1px 0 0 374px; background: #d4d4d4; border-radius: 2px; display: flex; align-items: center; color: #2c6353; font-size: 16.500px; }
.tb-search svg { width: 20px; height: 20px; margin: 0 14px 0 21px; color: #333; }
.signin { margin: -1px 0 0 338px; width: 58px; font-size: 14.500px; }
.avatar { width: 25px; height: 25px; }
.win-min { width: 13px; height: 14px; margin-left: 40px; }
.win-max { width: 14px; height: 14px; margin-left: 42px; margin-top: 3px; }
.win-x { width: 14px; height: 14px; margin-left: 41px; margin-top: 3px; }

/* ribbon tabs */
.tabs { height: 42px; flex: none; background: #fafafa; display: flex; align-items: flex-start; font-size: 16.500px; }
.tabs > span { height: 38px; line-height: 40px; text-align: center; }
.t-file { width: 40px; margin-left: 21px; }
.t-home { width: 60px; margin-left: 34px; }
.t-insert { width: 60px; margin-left: 25px; }
.t-model { width: 90px; margin-left: 22px; }
.t-view { width: 39px; margin-left: 31px; font-weight: 600; border-bottom: 3px solid #117865; }
.t-opt { width: 90px; margin-left: 29px; }
.t-help { width: 50px; margin-left: 22px; }
.ctx { background: #fff; color: #117865; font-weight: 600; }
.t-format { width: 94px; margin-left: 12px; }
.t-drill { width: 124px; margin-left: 5px; }
.share { margin: 5px 7px 0 auto; width: 105px; height: 30px; border: 0; border-radius: 4px; background: #117865; color: #fff; font: inherit; font-size: 14.500px; display: flex; align-items: center; padding-bottom: 2px; }
.share svg { width: 20px; height: 19px; margin: 0 10px 0 9px; }
.share svg.chev { width: 13px; height: 8px; margin: 2px 0 0 4px; stroke-width: 2; }

/* ribbon */
.ribbon { height: 115px; flex: none; background: #fafafa; display: flex; padding: 3px 0 2px; position: relative; z-index: 2; box-shadow: 0 2px 5px rgba(0,0,0,.17); }
.group { height: 110px; border-right: 1px solid #d6d6d6; display: flex; flex-direction: column; justify-content: space-between; align-items: center; }
.g-themes { width: 613px; } .g-scale { width: 79px; } .g-mobile { width: 72px; } .g-options { width: 152px; } .g-panes { width: 351px; }
.glabel { font-size: 12.500px; line-height: 18px; margin-bottom: -3px; color: #444; letter-spacing: -0.100px; }
.gallery { display: flex; align-items: center; gap: 12px; width: 592px; height: 77px; margin: 10px 0 0 -1px; border: 1px solid #777; background: #fff; padding-left: 6px; }
.theme { width: 83px; height: 47px; border: 1px solid #222; padding: 2px 3px 3px; }
.theme b { display: block; font-size: 12.500px; font-weight: 400; line-height: 14px; letter-spacing: 1px; }
.bars { display: flex; align-items: flex-end; gap: 2px; height: 26px; }
.bars i { width: 7.500px; }
.more { margin-left: -6px; width: 21px; height: 75px; border-left: 1px solid #777; display: flex; align-items: center; justify-content: center; background: #fafafa; }
.more svg { width: 8px; height: 5px; stroke-width: 3; margin-top: 6px; }
.big { display: flex; flex-direction: column; align-items: center; text-align: center; margin-top: 7px; line-height: 20px; gap: 6px; font-size: 14.500px; }
.big > svg { width: 36px; height: 36px; color: #444; stroke-width: 2; }
.tiny { width: 8px; height: 5px; stroke-width: 3; margin: 0 0 2px 4px; }
.opts { align-self: flex-start; padding: 7px 0 0 22px; display: flex; flex-direction: column; gap: 11px; font-size: 14.500px; }
.opts label { display: flex; align-items: center; gap: 5px; height: 20px; }
.opts i { width: 20px; height: 20px; border: 1px solid #777; background: #fff; }
.row { display: flex; align-self: stretch; letter-spacing: -0.250px; }
.b-filters { width: 50px; height: 90px; margin: 3px 0 0 10px; padding-top: 4px; background: #ebebeb; outline: 1px solid #333; outline-offset: -1px; }
.b-book { width: 78px; } .b-sel { width: 64px; } .b-perf { width: 89px; } .b-sync { width: 49px; }
.b-perf > svg { margin-left: 6px; }
.b-sync > svg { width: 40px; height: 40px; margin: -2px 0; }
.rest { flex: 1; display: flex; align-items: flex-end; justify-content: flex-end; padding: 0 6px 6px 0; }
.rest svg { width: 11px; height: 7px; stroke-width: 2.500; }

/* work area */
.work { height: 801px; flex: none; display: flex; position: relative; border-bottom: 1px solid #d5d4d2; }
.rail { width: 51px; border-right: 1px solid #d5d4d2; color: #777; }
.rail div { height: 50px; display: flex; align-items: center; justify-content: center; border-left: 3px solid transparent; padding: 0 3px 2px 0; }
.rail div.on { border-color: #117865; color: #222; padding: 0 1px 0 0; }
.rail svg { width: 21px; height: 20px; }
.rail svg.r1 { width: 18px; height: 18px; margin-left: -1px; }
.rail svg.r3 { width: 23px; height: 23px; }
.rail svg.r4 { width: 22px; height: 21px; margin-left: -2px; }
.rail text { font-size: 8.500px; font-weight: 600; }
.center { width: 1418px; display: grid; grid-template: 756px 44px / 1377px 41px; }
.canvas { background: #fff; padding-left: 23px; border-right: 1px solid #c8c6c4; }
.page { width: 1330px; height: 748px; background: #f9f8f3; border: 2px dotted #555; border-top: 0; position: relative; }
.card { position: absolute; padding: 11px 9px 9px 10px; }
.card .inner { height: 100%; display: flex; flex-direction: column; justify-content: center; padding: 4px 0 0 13px; border: 1px solid #a9aaa8; }
.card p { font-size: 25px; line-height: 34px; color: #6b6562; letter-spacing: -0.900px; }
.card strong { font-size: 25px; line-height: 34px; margin-top: 8px; color: #0b0f22; }
.c1 { left: 149px; top: 177px; width: 470px; height: 398px; border: 1px solid #ccdbd8; border-radius: 16px; background: #e2ebe6; box-shadow: 4px 4px 10px rgba(0,0,0,.08); }
.c1 .inner { background: #c4d6d5; border-color: #a0b3b2; }
.c2 { left: 705px; top: 177px; width: 455px; height: 398px; border: 1px solid #c5c4c4; background: #efebea; box-shadow: 6px 6px 12px rgba(0,0,0,.08); }
.c2 .inner { background: #e2d0c2; }
.h { position: absolute; border: 0 solid #999; width: 12px; height: 12px; }
.tl { left: -1px; top: -2px; border-width: 5px 0 0 5px; } .tr { right: -2px; top: -2px; border-width: 5px 5px 0 0; }
.bl { left: -1px; bottom: -2px; border-width: 0 0 5px 5px; } .br { right: -2px; bottom: -2px; border-width: 0 5px 5px 0; }
.tm, .bm { width: 15px; height: 5px; border-top-width: 5px; left: 219px; } .tm { top: -2px; } .bm { bottom: -2px; }
.lm, .rm { width: 5px; height: 15px; border-left-width: 5px; top: 190px; } .lm { left: -1px; } .rm { right: -2px; }
.tools { position: absolute; right: 0; top: -31px; display: flex; gap: 5px; }
.tools span { width: 30px; height: 29px; background: #fff; display: flex; align-items: center; justify-content: center; gap: 4px; color: #666; padding-top: 2px; }
.tools svg { width: 20px; height: 19px; stroke-width: 2.500; }
.dots i { width: 3.500px; height: 3.500px; border-radius: 50%; background: #666; }
.filters { background: #fff; border-right: 1px solid #dedcda; display: flex; flex-direction: column; align-items: center; color: #17172e; }
.dbl { width: 16px; height: 16px; stroke-width: 1.600; }
.flip { transform: scaleX(-1); margin: 15px 0 20px 1px; }
.fun { width: 15px; height: 16px; transform: rotate(90deg); stroke-width: 3.500; margin-left: 6px; }
.filters span { writing-mode: vertical-rl; font-size: 17.500px; font-weight: 600; line-height: 22px; margin: 10px 0 0 0; }
.pages { grid-column: 1 / 3; display: flex; background: #f2f1ef; font-size: 14px; }
.views { width: 160px; display: flex; border-right: 1px solid #999; }
.desk { width: 24px; height: 18px; margin: 9px 0 0 15px; color: #555; }
.views::before { content: ""; width: 29px; height: 3px; border-radius: 2px; background: #117865; margin: 34px -42px 0 13px; }
.phone { width: 15px; height: 25px; margin: 6px 0 0 36px; color: #555; }
.al, .ar { border: 5px solid transparent; margin-top: 17px; height: 10px; }
.al { border-left: 0; border-right: 6px solid #c5c3c1; margin-left: 27px; }
.ar { border-right: 0; border-left: 6px solid #c5c3c1; margin-left: 22px; }
.pt { background: #fff; border-right: 1px solid #d0cfcd; height: 44px; line-height: 46px; text-align: center; }
.p1 { width: 188px; font-weight: 600; border-bottom: 5px solid #117865; } .p2 { width: 204px; } .p3 { width: 171px; }
.add { width: 49px; height: 44px; background: #117865; color: #fff; display: flex; align-items: center; justify-content: center; padding-bottom: 3px; }
.add svg { width: 14px; height: 14px; stroke-width: 3.500; }

/* visualizations */
.viz { width: 226px; border-right: 1px solid #dedcda; display: flex; flex-direction: column; }
.head { display: flex; justify-content: space-between; align-items: center; height: 26px; margin: 11px 10px 0; }
h2 { font-size: 18.500px; font-weight: 600; }
h3 { font-size: 15px; font-weight: 600; margin: 10px 0 0 10px; line-height: 20px; }
.modes { display: flex; margin: 5px 0 0 10px; gap: 42px; }
.m { width: 40px; height: 40px; display: flex; align-items: center; justify-content: center; border-radius: 2px; }
.m.on { background: #d0cfcd; }
.m svg { width: 30px; height: 30px; margin-left: 2px; }
.m.on svg { margin-left: 0; }
.notch { width: 225px; height: 12px; margin-top: 5px; color: #8a8886; stroke-width: 1; }
.grid { display: grid; grid-template-columns: repeat(6, 23px); gap: 12px; margin: 13px 0 0 14px; height: 278px; align-content: start; }
.grid svg { width: 23px; height: 23px; stroke-width: 1.100; }
.k { stroke: #333; stroke-width: 1.700; fill: none; } .n { stroke-width: 1.200; }
.b { stroke: #1f6cab; fill: #80bdf0; stroke-width: 1.200; }
.grid .g { stroke: #7b7875; fill: #c4c1be; }
.w { stroke: #3b3a39; fill: #fff; stroke-width: 1.300; }
.t { stroke: #2b7ab0; stroke-width: 1.500; }
.gl { stroke: #8a8886; }
.n123 { font-size: 10px; fill: #2c8acb; }
.grid .r, .grid .py { font-weight: 700; font-size: 19px; fill: #2d87bd; }
.grid .sel { outline: 1.500px solid #222; outline-offset: 3px; }
.ell { display: flex; gap: 5px; padding: 7px 0 0 2px; }
.ell i { width: 3px; height: 3px; background: #333; border-radius: 50%; }
.wells { border-top: 1px solid #dedcda; height: 370px; overflow: hidden; position: relative; padding-left: 4px; }
h4 { font-size: 14.500px; font-weight: 400; line-height: 22px; padding-left: 11px; margin: 11px 0 5px; }
.well { width: 214px; height: 35px; border: 1px dashed #bbb; background: #fff; line-height: 32px; padding-left: 13px; font-size: 14.500px; letter-spacing: -0.080px; }
.well.first { height: 45px; padding: 4px; }
.chip { width: 205px; height: 28px; border: 1px solid #b5b3b1; background: #edebe9; border-radius: 2px; display: flex; align-items: center; padding-left: 5px; letter-spacing: -0.120px; }
.chip span { width: 161px; }
.chip svg { width: 15px; height: 9px; }
.chip svg.x { width: 11px; height: 11px; margin-left: 7px; }
h4.cat { margin: 11px 0 6px; } h4.tips { margin: 12px 0 7px; }
h4.dt { font-weight: 600; margin: 11px 0 0; color: #484644; }
.tg { display: flex; justify-content: space-between; align-items: center; width: 194px; height: 22px; padding-left: 11px; margin-top: 10px; font-size: 14.500px; letter-spacing: -0.080px; }
.tg.t2 { margin-top: 11px; }
.toggle { width: 40px; height: 20px; border: 1px solid #666; border-radius: 10px; background: #fff; font-size: 11px; display: flex; align-items: center; gap: 2px; padding-left: 5px; color: #555; }
.toggle i { width: 10px; height: 10px; background: #555; border-radius: 50%; }
.onn { background: #117865; border-color: #117865; color: #fff; gap: 4px; } .onn i { background: #fff; }
.well.last { margin-top: 12px; padding-left: 10px; height: 25px; border-bottom: 0; overflow: hidden; }
.sb { position: absolute; background: #8a8886; }
.viz .sb { right: 0; top: 3px; width: 7px; height: 350px; border-radius: 4px; }

/* data pane */
.data { width: 225px; }
.find { margin: 20px 0 0 5px; width: 215px; height: 30px; background: #fff; border: 1px solid #ccc; border-bottom-color: #666; border-radius: 4px; display: flex; align-items: center; font-size: 16.500px; color: #666; }
.find svg { width: 18px; height: 18px; margin: 0 9px 0 14px; transform: scaleX(-1); }
.tree { margin-top: 11px; position: relative; font-size: 14.500px; color: #333; }
.tn, .f { height: 30px; display: flex; align-items: center; position: relative; }
.tn { padding-left: 17px; } .f { padding-left: 55px; letter-spacing: -0.080px; }
.c { width: 14px; height: 9px; margin-right: 5px; }
.ti { width: 16px; height: 16px; margin-right: 7px; }
.f > i { width: 15px; height: 15px; border: 1px solid #777; border-radius: 2px; background: #faf9f8; margin-right: 10px; }
.f > svg { width: 16px; height: 17px; margin-right: 6px; }
.f > svg.ex { position: absolute; left: 38px; width: 9px; height: 14px; }
.ok { position: absolute; left: 44px; top: 15px; width: 14px; height: 14px; }
.data .sb { right: 5px; top: -1px; width: 10px; height: 664px; }
.ghost { position: absolute; left: 1432px; top: 306px; width: 200px; height: 23px; padding-left: 34px; line-height: 22px; font-size: 15px; color: rgba(90,110,140,.14); background: linear-gradient(90deg, rgba(200,225,250,.3), rgba(200,225,250,0)); }

/* status bar */
.status { height: 29px; flex: none; border-bottom: 1px solid #000; background: #f2f1ef; color: #444; display: flex; align-items: center; font-size: 14.500px; }
.pg { width: 1649px; padding: 2px 0 0 5px; }
.status b { font-size: 18px; line-height: 20px; }
.minus { width: 18px; padding-left: 6px; }
.slider { width: 125px; height: 12px; position: relative; background: linear-gradient(#666, #666) 0 6px / 100% 1px no-repeat; }
.tick { position: absolute; left: 62px; top: 2px; width: 1px; height: 8px; background: #666; }
.thumb { position: absolute; left: 48px; width: 5px; height: 12px; background: #555; }
.plus { width: 33px; padding-left: 6px; }
.pct { width: 52px; font-size: 14px; }
.status svg { width: 22px; height: 17px; stroke-width: 1.500; color: #4a6f83; }

/* taskbar */
.taskbar { height: 51px; flex: none; padding-top: 1px; background: linear-gradient(90deg, #37263f, #3d2842 25%, #3a2741 50%, #34243d); color: #fff; display: flex; align-items: stretch; }
.start { width: 60px; display: flex; align-items: center; padding: 0 0 1px 20px; }
.start svg { width: 20px; height: 20px; stroke: none; }
.tsearch { width: 360px; height: 49px; background: #f2f2f2; border: 1px solid #ccc; color: #222; display: flex; align-items: center; font-size: 18px; letter-spacing: -0.080px; padding-bottom: 2px; }
.tsearch .g { width: 20px; height: 20px; margin: 0 15px 0 14px; }
.tsearch span { width: 221px; }
.spark { width: 76px; height: 30px; stroke: none; }
.apps { display: flex; margin-left: 3px; }
.app { width: 62px; display: flex; align-items: center; justify-content: center; border-bottom: 3px solid transparent; padding-top: 2px; }
.app svg { width: 30px; height: 30px; stroke: none; }
.hndl { fill: none; stroke: #36a3e2; stroke-width: 2; }
.app.run { background: linear-gradient(#7db4e3, #7db4e3) center 46px / 51px 3px no-repeat; border-bottom: 0; padding-bottom: 3px; }
.app.active { background: linear-gradient(#7db4e3, #7db4e3) 0 46px / 100% 3px no-repeat, #63526a; width: 61px; }
.zm { font-size: 8.500px; fill: #fff; font-weight: 600; } .wd { font-size: 11px; font-weight: 700; fill: #fff; }
.weather { margin-left: 274px; display: flex; align-items: center; font-size: 17.200px; gap: 10px; width: 155px; padding-bottom: 3px; }
.weather svg { width: 30px; height: 30px; stroke: none; } .weather text { font-size: 12px; font-weight: 600; fill: #fff; }
.tray { width: 171px; display: flex; align-items: center; padding-bottom: 1px; }
.s1 { width: 16px; height: 10px; } .s2 { width: 15px; height: 18px; margin-left: 16px; } .s3 { width: 21px; height: 14px; margin-left: 11px; }
.s4 { width: 20px; height: 14px; margin-left: 10px; } .s5 { width: 15px; height: 16px; margin-left: 13px; } .s6 { width: 22px; height: 16px; margin-left: 11px; }
.tray svg { stroke-width: 1.200; }
.clock { width: 92px; display: flex; flex-direction: column; align-items: center; font-size: 14.500px; line-height: 23px; padding-top: 1px; }
.notif { margin-left: 10px; padding-top: 14px; border-right: 1px solid #7b6f82; width: 47px; }
.notif svg { width: 32px; height: 32px; stroke-width: 1; } .notif text { font-size: 14px; font-weight: 600; fill: #fff; }
```
